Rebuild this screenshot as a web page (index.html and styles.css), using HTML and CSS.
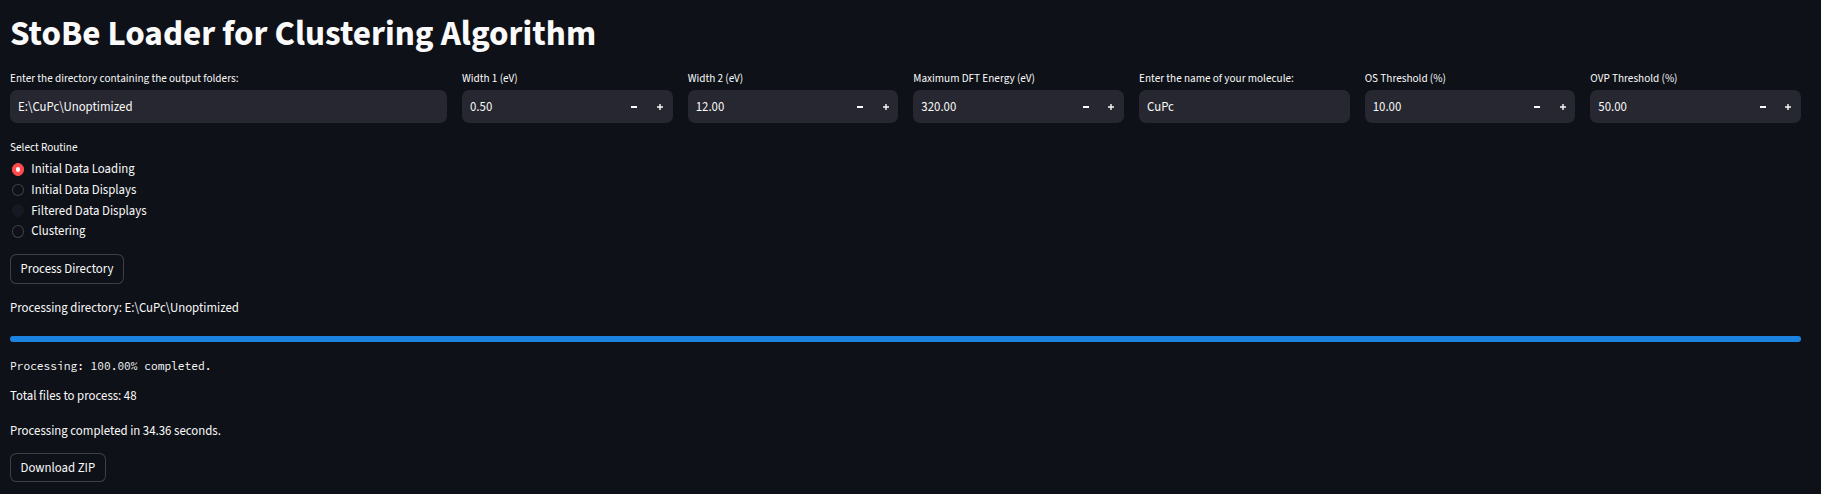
FILE: index.html
```html
<!DOCTYPE html>
<html lang="en">
<head>
<meta charset="utf-8">
<title>StoBe Loader for Clustering Algorithm</title>
<link rel="stylesheet" href="styles.css">
</head>
<body>
<main class="page">
  <h1 class="title">StoBe Loader for Clustering Algorithm</h1>

  <div class="fields">
    <div class="field">
      <label class="field-label">Enter the directory containing the output folders:</label>
      <div class="input"><span class="input-value">E:\CuPc\Unoptimized</span></div>
    </div>
    <div class="field">
      <label class="field-label">Width 1 (eV)</label>
      <div class="input number"><span class="input-value">0.50</span>
        <span class="step"><svg viewBox="0 0 8 8" width="8" height="8"><rect x="1" y="3" width="6" height="2" fill="#fafafa"/></svg></span>
        <span class="step"><svg viewBox="0 0 8 8" width="8" height="8"><path d="M4 1v6M1 4h6" stroke="#fafafa" stroke-width="1.4"/></svg></span>
      </div>
    </div>
    <div class="field">
      <label class="field-label">Width 2 (eV)</label>
      <div class="input number"><span class="input-value">12.00</span>
        <span class="step"><svg viewBox="0 0 8 8" width="8" height="8"><rect x="1" y="3" width="6" height="2" fill="#fafafa"/></svg></span>
        <span class="step"><svg viewBox="0 0 8 8" width="8" height="8"><path d="M4 1v6M1 4h6" stroke="#fafafa" stroke-width="1.4"/></svg></span>
      </div>
    </div>
    <div class="field">
      <label class="field-label">Maximum DFT Energy (eV)</label>
      <div class="input number"><span class="input-value">320.00</span>
        <span class="step"><svg viewBox="0 0 8 8" width="8" height="8"><rect x="1" y="3" width="6" height="2" fill="#fafafa"/></svg></span>
        <span class="step"><svg viewBox="0 0 8 8" width="8" height="8"><path d="M4 1v6M1 4h6" stroke="#fafafa" stroke-width="1.4"/></svg></span>
      </div>
    </div>
    <div class="field">
      <label class="field-label">Enter the name of your molecule:</label>
      <div class="input"><span class="input-value">CuPc</span></div>
    </div>
    <div class="field">
      <label class="field-label">OS Threshold (%)</label>
      <div class="input number"><span class="input-value">10.00</span>
        <span class="step"><svg viewBox="0 0 8 8" width="8" height="8"><rect x="1" y="3" width="6" height="2" fill="#fafafa"/></svg></span>
        <span class="step"><svg viewBox="0 0 8 8" width="8" height="8"><path d="M4 1v6M1 4h6" stroke="#fafafa" stroke-width="1.4"/></svg></span>
      </div>
    </div>
    <div class="field">
      <label class="field-label">OVP Threshold (%)</label>
      <div class="input number"><span class="input-value">50.00</span>
        <span class="step"><svg viewBox="0 0 8 8" width="8" height="8"><rect x="1" y="3" width="6" height="2" fill="#fafafa"/></svg></span>
        <span class="step"><svg viewBox="0 0 8 8" width="8" height="8"><path d="M4 1v6M1 4h6" stroke="#fafafa" stroke-width="1.4"/></svg></span>
      </div>
    </div>
  </div>

  <div class="radio-group">
    <div class="radio-title">Select Routine</div>
    <div class="radio"><span class="dot selected"></span><span>Initial Data Loading</span></div>
    <div class="radio"><span class="dot"></span><span>Initial Data Displays</span></div>
    <div class="radio"><span class="dot faint"></span><span>Filtered Data Displays</span></div>
    <div class="radio"><span class="dot"></span><span>Clustering</span></div>
  </div>

  <button class="btn btn-process">Process Directory</button>

  <p class="text text-dir">Processing directory: E:\CuPc\Unoptimized</p>

  <div class="progress"><div class="progress-fill" style="width:100%"></div></div>

  <p class="code">Processing: 100.00% completed.</p>
  <p class="text text-total">Total files to process: 48</p>
  <p class="text text-done">Processing completed in 34.36 seconds.</p>

  <button class="btn btn-zip">Download ZIP</button>
</main>
</body>
</html>
```

FILE: styles.css
```css
* { box-sizing: border-box; }

html, body {
  margin: 0;
  padding: 0;
  background: #0e1117;
  color: #fafafa;
  font-family: "Source Sans 3", "Source Sans Pro", Roboto, sans-serif;
}

.page {
  width: 1821px;
  height: 494px;
  padding: 0 20px 0 10px;
  display: flex;
  flex-direction: column;
  align-items: flex-start;
}

.title {
  margin: 9px 0 0 0;
  font-size: 35.2px;
  line-height: 50px;
  font-weight: 700;
}

.fields {
  margin-top: 9px;
  width: 100%;
  display: grid;
  grid-template-columns: 437px repeat(6, 1fr);
  column-gap: 15px;
}

.field {
  display: flex;
  flex-direction: column;
}

.field-label {
  font-size: 11.2px;
  line-height: 14px;
  height: 22px;
  padding-top: 4px;
}

.input {
  height: 33px;
  background: #262730;
  border-radius: 7px;
  display: flex;
  align-items: center;
  padding-left: 8px;
  font-size: 12.8px;
}

.input-value {
  flex: 1;
}

.step {
  width: 25.6px;
  height: 100%;
  display: flex;
  align-items: center;
  justify-content: center;
}

.radio-group {
  margin-top: 18px;
  display: flex;
  flex-direction: column;
}

.radio-title {
  font-size: 11.2px;
  line-height: 14px;
  height: 18px;
}

.radio {
  height: 20.7px;
  display: flex;
  align-items: center;
  gap: 7px;
  font-size: 12.8px;
}

.dot {
  width: 12.8px;
  height: 12.8px;
  border-radius: 50%;
  background: #0e1117;
  border: 1px solid rgba(250, 250, 250, 0.2);
  margin-left: 1.5px;
  position: relative;
  flex: none;
}

.dot.faint {
  background: #161922;
  border-color: #161922;
}

.dot.selected {
  background: #ff4b4b;
  border-color: #ff4b4b;
}

.dot.selected::after {
  content: "";
  position: absolute;
  left: 50%;
  top: 50%;
  width: 4.5px;
  height: 4.5px;
  margin: -2.25px 0 0 -2.25px;
  border-radius: 50%;
  background: #fafafa;
}

.btn {
  font-family: inherit;
  font-size: 12.8px;
  color: #fafafa;
  background: #0e1117;
  border: 1px solid rgba(250, 250, 250, 0.2);
  border-radius: 6.4px;
  height: 30px;
  padding: 0 9.6px;
  white-space: nowrap;
}

.btn-process {
  margin-top: 12px;
}

.text {
  margin: 0;
  font-size: 12.8px;
  line-height: 20px;
}

.text-dir {
  margin-top: 14px;
}

.progress {
  margin-top: 18.5px;
  width: 100%;
  height: 6px;
  border-radius: 3px;
  background: #262730;
}

.progress-fill {
  height: 100%;
  border-radius: 3px;
  background: #1c83e1;
}

.code {
  margin: 13.5px 0 0 0;
  font-family: "Source Code Pro", "DejaVu Sans Mono", monospace;
  font-size: 11.2px;
  line-height: 20px;
}

.text-total {
  margin-top: 10.5px;
}

.text-done {
  margin-top: 14.5px;
}

.btn-zip {
  margin-top: 12.5px;
  height: 29px;
}
```
